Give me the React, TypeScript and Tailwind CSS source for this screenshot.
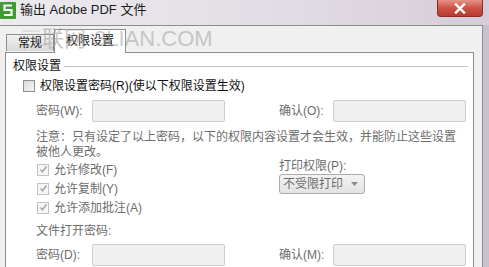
import React from 'react'

const font = "font-['Liberation_Sans','Noto_Sans_CJK_SC',sans-serif]"

function WpsLogo() {
  return (
    <svg width="16" height="17" viewBox="0 0 16 17">
      <rect x="0" y="0" width="16" height="17" rx="1" fill="#3f9b34" />
      <path d="M12 3.5H4.5V8H11.5V13H4" fill="none" stroke="#fff" strokeWidth="2.2" />
    </svg>
  )
}

function CloseButton() {
  return (
    <div className="mr-[6px] flex h-[17px] w-[46px] items-center justify-center rounded-b-[4px] border border-t-0 border-[#8e2c24] bg-gradient-to-b from-[#e3938a] via-[#cf5246] to-[#b93a2e]">
      <svg width="12" height="11" viewBox="0 0 12 11">
        <path d="M2 1.5L10 9.5M10 1.5L2 9.5" stroke="#fff" strokeWidth="2.4" strokeLinecap="square" />
      </svg>
    </div>
  )
}

function Check({ checked, disabled }: { checked?: boolean; disabled?: boolean }) {
  return (
    <span
      className={
        disabled
          ? 'flex h-[12px] w-[12px] items-center justify-center border border-[#c2c2c2] bg-[#f6f6f6]'
          : 'flex h-[12px] w-[12px] items-center justify-center border border-[#8e8f8f] bg-gradient-to-br from-[#d8d8d8] to-[#f7f7f7]'
      }
    >
      {checked && (
        <svg width="9" height="9" viewBox="0 0 9 9">
          <path d="M1.5 4.5L3.5 6.8L7.5 1.5" fill="none" stroke="#a9a9a9" strokeWidth="1.6" />
        </svg>
      )}
    </span>
  )
}

function Field() {
  return <div className="h-[22px] w-[133px] rounded-[2px] border border-[#cdcdcd] bg-[#f0f0f0]" />
}

export default function App() {
  return (
    <div className={`relative h-[267px] w-[489px] overflow-hidden bg-[#cbbfd0] text-[12px] ${font}`}>
      {/* title bar */}
      <div className="flex h-[25px] items-start justify-between bg-gradient-to-r from-[#ecebee] via-[#e4dfe6] to-[#d6ccd9]">
        <div className="flex items-center gap-[4px] pt-[1px]">
          <WpsLogo />
          <span className="text-[13px] leading-[18px] text-[#1c1c1c]">输出 Adobe PDF 文件</span>
        </div>
        <CloseButton />
      </div>

      <div className="flex">
        <div className="h-[242px] w-[483px] border-t border-r border-[#8d8d8d] bg-[#f0f0f0]">
          {/* tabs */}
          <div className="flex h-[26px] items-end pl-[6px] pt-[3px]">
            <div className="mb-[1px] flex h-[17px] w-[48px] items-center justify-center border border-b-0 border-[#8c8e94] bg-gradient-to-b from-[#f2f2f2] to-[#dadada] leading-[14px] text-[#111]">
              常规
            </div>
            <div className="-mb-[1px] flex h-[24px] w-[72px] items-center justify-center border border-b-0 border-[#8c8e94] bg-white pb-[2px] leading-[14px] text-[#111]">
              权限设置
            </div>
          </div>

          {/* panel */}
          <div className="ml-[5px] h-[216px] w-[469px] border border-[#8c8e94] bg-white text-[#6d6d6d]">
            <div className="flex items-center gap-[3px] pl-[7px] pr-[5px] pt-[6px]">
              <span className="leading-[14px] text-[#111]">权限设置</span>
              <div className="h-px flex-1 bg-[#c4c4c4]" />
            </div>

            <div className="mt-[6px] flex items-center gap-[5px] pl-[17px] leading-[14px] text-[#111]">
              <Check />
              <span>权限设置密码(R)(使以下权限设置生效)</span>
            </div>

            <div className="mt-[7px] flex items-center pl-[30px]">
              <div className="flex w-[243px] items-center">
                <span className="w-[56px] leading-[14px]">密码(W):</span>
                <Field />
              </div>
              <span className="w-[54px] leading-[14px]">确认(O):</span>
              <Field />
            </div>

            <div className="mt-[8px] pl-[30px] leading-[15px]">
              注意：只有设定了以上密码，以下的权限内容设置才会生效，并能防止这些设置
              <br />
              被他人更改。
            </div>

            <div className="flex pl-[30px]">
              <div className="w-[243px]">
                {['允许修改(F)', '允许复制(Y)', '允许添加批注(A)'].map(t => (
                  <div key={t} className="flex h-[19px] items-center gap-[5px] pl-[1px] leading-[14px]">
                    <Check checked disabled />
                    <span>{t}</span>
                  </div>
                ))}
              </div>
              <div>
                <div className="pt-[-1px] leading-[12px]">打印权限(P):</div>
                <div className="mt-[2px] flex h-[20px] w-[86px] items-center justify-between rounded-[3px] border border-[#acacac] bg-gradient-to-b from-[#f3f3f3] to-[#e3e3e3] pl-[3px] pr-[6px]">
                  <span className="leading-[14px]">不受限打印</span>
                  <svg width="7" height="4" viewBox="0 0 7 4">
                    <path d="M0 0H7L3.5 4Z" fill="#8a8a8a" />
                  </svg>
                </div>
              </div>
            </div>

            <div className="mt-[7px] pl-[30px] leading-[14px]">文件打开密码:</div>

            <div className="mt-[6px] flex items-center pl-[30px]">
              <div className="flex w-[243px] items-center">
                <span className="w-[56px] leading-[14px]">密码(D):</span>
                <Field />
              </div>
              <span className="w-[54px] leading-[14px]">确认(M):</span>
              <Field />
            </div>
          </div>
        </div>
      </div>

      {/* watermark */}
      <div className="pointer-events-none absolute left-[20px] top-[26px] flex items-center text-[22px] leading-[26px] text-[#9c9c9c]">
        <span className="opacity-20">三</span>
        <span className="opacity-55">联网</span>
        <span className="ml-[8px] opacity-50">3LIAN.COM</span>
      </div>
    </div>
  )
}
